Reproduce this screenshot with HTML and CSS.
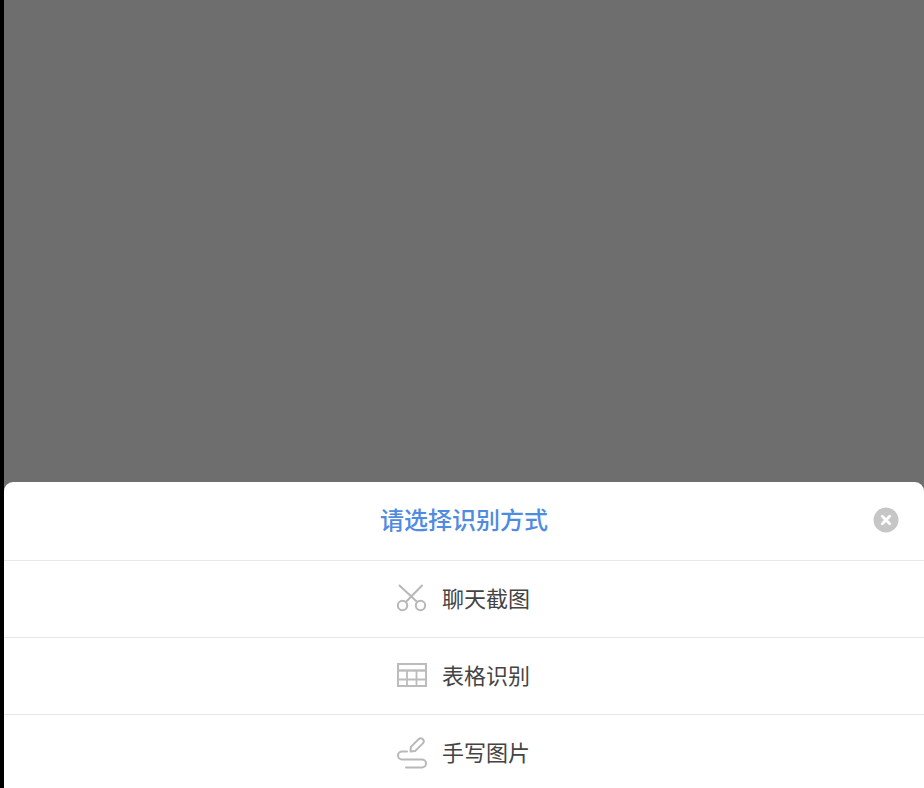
FILE: index.html
```html
<!DOCTYPE html>
<html lang="zh">
<head>
<meta charset="utf-8">
<title>请选择识别方式</title>
<link rel="stylesheet" href="styles.css">
</head>
<body>
<div class="screen">
  <div class="backdrop"></div>
  <div class="sheet">
    <div class="header">
      <span class="title">请选择识别方式</span>
      <svg class="close" width="26" height="26" viewBox="0 0 26 26">
        <circle cx="13" cy="13" r="12.5" fill="#c6c6c6"/>
        <path d="M9.300 9.300l7.400 7.400M16.700 9.300l-7.400 7.400" stroke="#fff" stroke-width="2.800" stroke-linecap="round"/>
      </svg>
    </div>
    <div class="row">
      <svg class="icon" width="32" height="32" viewBox="0 0 32 32" fill="none" stroke="#b8b8b8" stroke-width="2">
        <circle cx="6.500" cy="22.500" r="4.700"/>
        <circle cx="24.500" cy="22.500" r="4.700"/>
        <path d="M9.800 19L26 2.500M21.200 19L3.500 2.500" stroke-linecap="round"/>
      </svg>
      <span class="label">聊天截图</span>
    </div>
    <div class="row">
      <svg class="icon" width="32" height="32" viewBox="0 0 32 32" fill="none" stroke="#bcbcbc">
        <rect x="2" y="4" width="28" height="22" stroke-width="2"/>
        <path d="M2 10.500h28" stroke-width="2.400"/>
        <path d="M2 19.500h28M11 10v16M20.500 10v16" stroke-width="1.800"/>
      </svg>
      <span class="label">表格识别</span>
    </div>
    <div class="row">
      <svg class="icon" width="32" height="32" viewBox="0 0 32 32" fill="none" stroke="#b8b8b8" stroke-width="2" stroke-linecap="round" stroke-linejoin="round">
        <path d="M14.500 14.500L14.900 9.900L22.900 1.900A3 3 0 0 1 27.100 6.100L19.100 14.100Z"/>
        <path d="M11 14.500H6a4 4 0 0 0 0 8H26a4 4 0 0 1 0 8H10"/>
      </svg>
      <span class="label">手写图片</span>
    </div>
  </div>
</div>
</body>
</html>
```
FILE: styles.css
```css
html, body {
  margin: 0;
  padding: 0;
  height: 100%;
  background: #000;
}
.screen {
  width: 920px;
  height: 788px;
  margin-left: 4px;
  display: flex;
  flex-direction: column;
  overflow: hidden;
  background: #6e6e6e;
  font-family: "Noto Sans CJK SC", "Liberation Sans", sans-serif;
}
.backdrop {
  height: 482px;
  flex: none;
}
.sheet {
  flex: 1;
  background: #fff;
  border-radius: 9px 9px 0 0;
  display: flex;
  flex-direction: column;
}
.header {
  position: relative;
  height: 78px;
  flex: none;
  display: flex;
  align-items: center;
  justify-content: center;
  border-bottom: 1px solid #e8e8e8;
}
.title {
  font-size: 24px;
  font-weight: 500;
  color: #4f8be0;
  padding-bottom: 5px;
}
.close {
  position: absolute;
  right: 25px;
  top: 25px;
}
.row {
  height: 76px;
  flex: none;
  display: flex;
  align-items: center;
  justify-content: center;
  gap: 14px;
  padding-right: 2px;
  border-bottom: 1px solid #e8e8e8;
}
.row:last-child {
  border-bottom: none;
}
.label {
  font-size: 22px;
  color: #444;
  padding-bottom: 4px;
}
```
